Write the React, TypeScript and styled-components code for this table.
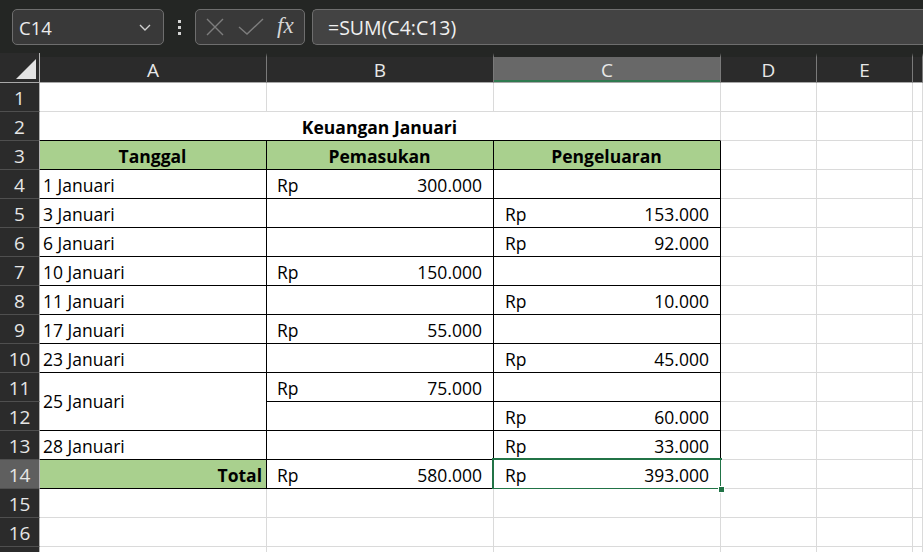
import React from 'react';
import styled, { createGlobalStyle, css } from 'styled-components';

const GlobalStyle = createGlobalStyle`
  html, body { margin: 0; padding: 0; background: #ffffff; overflow: hidden; }
  body { width: 923px; height: 552px; font-family: "Open Sans", "Noto Sans", sans-serif; }
  * { box-sizing: border-box; }
`;

const Page = styled.div`
  display: flex;
  flex-direction: column;
  width: 923px;
  height: 552px;
  overflow: hidden;
  background: #ffffff;
`;

const Toolbar = styled.div`
  flex: none;
  height: 53px;
  background: #242624;
  display: flex;
  align-items: flex-start;
  padding: 9px 0 0 12px;
  overflow: hidden;
`;

const Box = styled.div`
  height: 36px;
  border: 1px solid #6e6e6e;
  border-radius: 5px;
  background: #393939;
  display: flex;
  align-items: center;
  flex: none;
`;

const NameBox = styled(Box)`
  width: 152px;
  padding: 0 7px 0 6px;
  justify-content: space-between;
  color: #ececec;
  font-size: 18.5px;
`;

const Dots = styled.div`
  width: 31px;
  height: 36px;
  flex: none;
  display: flex;
  flex-direction: column;
  align-items: center;
  justify-content: center;
  gap: 3px;
  & > span { width: 3px; height: 3px; background: #d4d4d4; display: block; }
`;

const FxBox = styled(Box)`
  width: 110px;
  padding: 0 6px 0 9px;
  gap: 13px;
`;

const FxLabel = styled.span`
  font-family: "Liberation Serif", "DejaVu Serif", serif;
  font-style: italic;
  font-size: 23px;
  color: #d6d6d6;
  margin-left: 0px;
  line-height: 1;
  margin-top: -3px;
`;

const FormulaBox = styled(Box)`
  margin-left: 7px;
  width: 700px;
  padding-left: 15px;
  background: #434343;
  border-right: none;
  color: #f0f0f0;
  font-size: 19.5px;
`;

const Sheet = styled.div`
  display: grid;
  grid-template-columns: 40px 227px 227px 227px 96px 96px 1fr;
  grid-template-rows: 30px repeat(17, 29px);
  background: #ffffff;
`;

const Corner = styled.div`
  background: #2b2b2b;
  border-right: 1px solid #b4b4b4;
  border-bottom: 1px solid #a8a8a8;
  display: flex;
  align-items: flex-end;
  justify-content: flex-end;
  padding: 0 3px 3px 0;
`;

const ColHeader = styled.div<{ $active?: boolean }>`
  background: ${p => (p.$active ? '#686868' : '#2b2b2b')};
  border-bottom: 1px solid #a8a8a8;
  border-right: 1px solid #7a7a7a;
  border-top: 4px solid #242624;
  color: #e8e8e8;
  font-size: 19px;
  display: flex;
  align-items: center;
  justify-content: center;
  padding-top: 1px;
  ${p => p.$active && css`box-shadow: inset 0 -2px 0 #2f7a50;`}
`;

const RowHeader = styled.div<{ $active?: boolean }>`
  background: ${p => (p.$active ? '#5f5f5f' : '#2b2b2b')};
  border-right: 1px solid #b4b4b4;
  border-bottom: 1px solid #4f4f4f;
  color: #e6e6e6;
  font-size: 19px;
  display: flex;
  align-items: center;
  justify-content: center;
  padding-top: 2px;
`;

type Align = 'left' | 'right' | 'center';

const Cell = styled.div<{
  $align?: Align;
  $bold?: boolean;
  $fill?: boolean;
  $table?: boolean;
  $under?: boolean;
  $span?: number;
  $rows?: number;
  $middle?: boolean;
  $selected?: boolean;
}>`
  position: relative;
  grid-column: span ${p => p.$span ?? 1};
  grid-row: span ${p => p.$rows ?? 1};
  background: ${p => (p.$fill ? '#a9d08e' : '#ffffff')};
  border-right: 1px solid ${p => (p.$table ? '#000000' : '#dadada')};
  border-bottom: 1px solid ${p => (p.$table || p.$under ? '#000000' : '#dadada')};
  font-family: "Open Sans", "Noto Sans", sans-serif;
  font-size: 17.5px;
  font-weight: ${p => (p.$bold ? 700 : 400)};
  color: #000000;
  display: flex;
  align-items: ${p => (p.$middle ? 'center' : 'flex-end')};
  justify-content: ${p =>
    p.$align === 'right' ? 'flex-end' : p.$align === 'center' ? 'center' : 'flex-start'};
  padding: 0 4px 0 3px;
  line-height: 25px;
  white-space: nowrap;
  ${p =>
    p.$selected &&
    css`
      &::after {
        content: '';
        position: absolute;
        left: -2px;
        top: -2px;
        right: -2px;
        bottom: -2px;
        border: 2px solid #217346;
        pointer-events: none;
      }
    `}
`;

const Money = styled(Cell)`
  justify-content: space-between;
  padding: 0 11px 0 10px;
`;

const MoneyC = styled(Money)`
  padding: 0 11px 0 11px;
`;

const Handle = styled.span`
  position: absolute;
  right: -5px;
  bottom: -5px;
  width: 7px;
  height: 7px;
  background: #217346;
  border: 1px solid #ffffff;
  z-index: 2;
`;

const Chevron = () => (
  <svg width="14" height="10" viewBox="0 0 14 10" style={{ marginRight: 4 }}>
    <polyline points="2,3 7,8 12,3" fill="none" stroke="#cfcfcf" strokeWidth="1.4" />
  </svg>
);

const XIcon = () => (
  <svg width="20" height="20" viewBox="0 0 20 20">
    <path d="M2 2 L18 18 M18 2 L2 18" stroke="#7d7d7d" strokeWidth="1.4" fill="none" />
  </svg>
);

const CheckIcon = () => (
  <svg width="26" height="20" viewBox="0 0 26 20">
    <polyline points="1,10 9,17 25,2" stroke="#7d7d7d" strokeWidth="1.4" fill="none" />
  </svg>
);

const SelectAll = () => (
  <svg width="20" height="20" viewBox="0 0 20 20">
    <polygon points="0,20 20,20 20,0" fill="#e2e2e2" />
  </svg>
);

type Row =
  | { kind: 'empty' }
  | { kind: 'title' }
  | { kind: 'head' }
  | { kind: 'data'; date?: string; merged?: boolean; skipA?: boolean; inc?: string; out?: string }
  | { kind: 'total' };

const rows: Row[] = [
  { kind: 'empty' },
  { kind: 'title' },
  { kind: 'head' },
  { kind: 'data', date: '1 Januari', inc: '300.000' },
  { kind: 'data', date: '3 Januari', out: '153.000' },
  { kind: 'data', date: '6 Januari', out: '92.000' },
  { kind: 'data', date: '10 Januari', inc: '150.000' },
  { kind: 'data', date: '11 Januari', out: '10.000' },
  { kind: 'data', date: '17 Januari', inc: '55.000' },
  { kind: 'data', date: '23 Januari', out: '45.000' },
  { kind: 'data', date: '25 Januari', merged: true, inc: '75.000' },
  { kind: 'data', skipA: true, out: '60.000' },
  { kind: 'data', date: '28 Januari', out: '33.000' },
  { kind: 'total' },
  { kind: 'empty' },
  { kind: 'empty' },
  { kind: 'empty' },
];

const Blank = ({ n }: { n: number }) => (
  <>
    {Array.from({ length: n }).map((_, i) => (
      <Cell key={i} />
    ))}
  </>
);

const MoneyCell = ({ value, col }: { value?: string; col: 'B' | 'C' }) => {
  const C = col === 'B' ? Money : MoneyC;
  return value ? (
    <C $table>
      <span>Rp</span>
      <span>{value}</span>
    </C>
  ) : (
    <C $table />
  );
};

const renderRow = (r: Row) => {
  switch (r.kind) {
    case 'empty':
      return <Blank n={6} />;
    case 'title':
      return (
        <>
          <Cell $span={3} $align="center" $bold $under>
            Keuangan Januari
          </Cell>
          <Blank n={3} />
        </>
      );
    case 'head':
      return (
        <>
          <Cell $table $fill $bold $align="center">Tanggal</Cell>
          <Cell $table $fill $bold $align="center">Pemasukan</Cell>
          <Cell $table $fill $bold $align="center">Pengeluaran</Cell>
          <Blank n={3} />
        </>
      );
    case 'data':
      return (
        <>
          {!r.skipA && (
            <Cell $table $rows={r.merged ? 2 : 1} $middle={r.merged}>
              {r.date}
            </Cell>
          )}
          <MoneyCell value={r.inc} col="B" />
          <MoneyCell value={r.out} col="C" />
          <Blank n={3} />
        </>
      );
    case 'total':
      return (
        <>
          <Cell $table $fill $bold $align="right">Total</Cell>
          <Money $table>
            <span>Rp</span>
            <span>580.000</span>
          </Money>
          <MoneyC $table $selected>
            <span>Rp</span>
            <span>393.000</span>
            <Handle />
          </MoneyC>
          <Blank n={3} />
        </>
      );
  }
  return null;
};

export default function App() {
  return (
    <Page>
      <GlobalStyle />
      <Toolbar>
        <NameBox>
          <span>C14</span>
          <Chevron />
        </NameBox>
        <Dots>
          <span />
          <span />
          <span />
        </Dots>
        <FxBox>
          <XIcon />
          <CheckIcon />
          <FxLabel>fx</FxLabel>
        </FxBox>
        <FormulaBox>=SUM(C4:C13)</FormulaBox>
      </Toolbar>
      <Sheet>
        <Corner>
          <SelectAll />
        </Corner>
        {['A', 'B', 'C', 'D', 'E', ''].map(c => (
          <ColHeader key={c || 'F'} $active={c === 'C'}>
            {c}
          </ColHeader>
        ))}
        {rows.map((r, i) => (
          <React.Fragment key={i}>
            <RowHeader $active={i + 1 === 14}>{i + 1 <= 16 ? i + 1 : ''}</RowHeader>
            {renderRow(r)}
          </React.Fragment>
        ))}
      </Sheet>
    </Page>
  );
}
